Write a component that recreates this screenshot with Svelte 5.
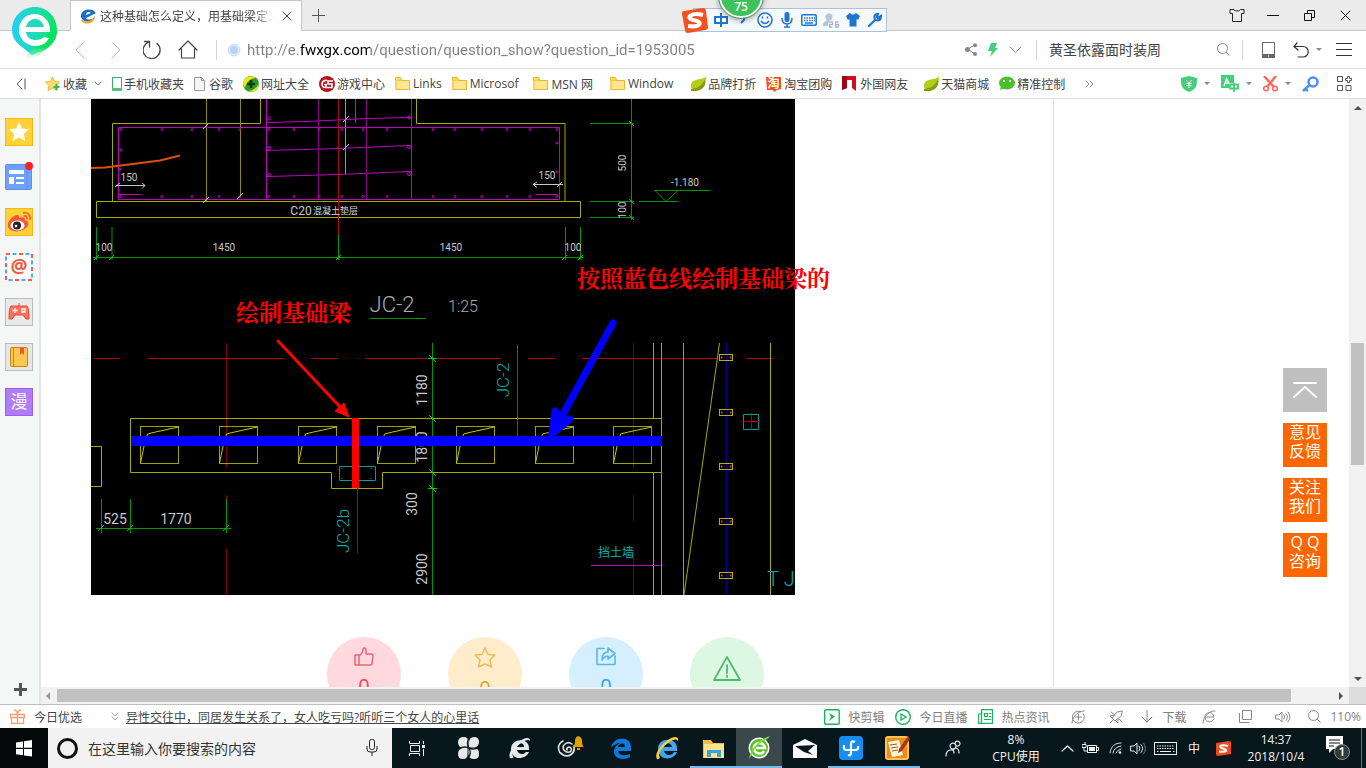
<script>
  const line = (d, c = '#444', w = 1) =>
    `<path d="${d}" fill="none" stroke="${c}" stroke-width="${w}" stroke-linecap="round" stroke-linejoin="round"/>`;
  const folder =
    '<path d="M.5 2.500h6l1 1.500h7.500v10H.5z" fill="#ffd84d"/><path d="M1 4.500h13.500v9H1z" fill="#ffe694" stroke="#edb72b"/><path d="M.5 4.500v-3h5l1 3" fill="#ffdb57" stroke="#edb72b"/>';
  const leaf =
    '<path d="M16 0C14 5 1 1 1 10c0 2 1 3 2 4 6 1 13-1 13-14z" fill="#b5cc18"/><path d="M1 13C7 13 13 9 15 3c2 9-5 13-14 12z" fill="#7f9e10"/>';
  const icons = {
    logo: '<defs><linearGradient id="lg" x1="0" y1="0" x2="1" y2="0"><stop offset="0" stop-color="#25cff0"/><stop offset=".6" stop-color="#1bdcab"/><stop offset="1" stop-color="#08e35f"/></linearGradient><linearGradient id="lf" x1="0" y1="0" x2="0" y2="1"><stop offset=".55" stop-color="#08e35f"/><stop offset="1" stop-color="#fff" stop-opacity="0"/></linearGradient></defs><path d="M23 0C10 0 0 10 0 23c0 10 7 15 15 21l5 4 14-6c7-4 11-11 11-19C45 10 35 0 23 0z" fill="url(#lg)"/><path d="M45 23c0 14-12 19-25 31H9c4-5 9-9 14-13l14-15z" fill="url(#lf)"/><path d="M7 23a15.500 15.500 0 0 1 31-1v3H14c1 6 5 8 10 8 4 0 6-1 8-3l5 1c-3 6-8 8-13 8C14 39 7 32 7 23z" fill="#fff"/><path d="M14 20c1-5 5-8 9-8s8 3 9 8z" fill="#1fd8c0"/>',
    favicon: '<path d="M1 8C0 0 12-2 16 4L6 9c2 3 7 1 9-1C12 14 3 14 1 8zm5-2 5-2c-2-2-5-1-5 2z" fill="#1b6fc0"/><path d="M1 10c4 4 10 3 14-3 0 9-13 10-14 3z" fill="#f6a51c"/>',
    close: line('M1 1l8 8M9 1l-8 8', '#444'),
    plus: line('M6.500 0v13M0 6.500h13', '#555', 1),
    shirt: line('M4.500 1.500h-3.500v4h2.500v8h9v-8h2.500v-4h-3.500c-.5 2-6.500 2-7 0z', '#222'),
    min: line('M0 6.500h12', '#111'),
    restore: '<path d="M.5 3.500h7v7h-7zM3.500 3V.5h7v7H8" fill="none" stroke="#111"/>',
    winclose: line('M1 1l9 9M10 1l-9 9', '#111'),
    back: line('M9 1L1 9l8 8', '#bbb', 1),
    fwd: line('M1 1l8 8-8 8', '#bbb', 1),
    reload: line('M14 3.500a8.500 8.500 0 1 1-8-1.500M1.500 1.500h5v5.500', '#444', 1.3),
    home: line('M1 10l9-9 9 9M3.500 8.500v9.500h13V8.500', '#444', 1.2),
    globe: '<circle cx="7" cy="7" r="6.500" fill="#e3edfc"/><circle cx="7" cy="7" r="4" fill="#b5d1fa"/><circle cx="7" cy="7" r="5.500" fill="none" stroke="#cadefb"/>',
    share: '<path d="M2.500 6L10 2M2.500 6L10 11" stroke="#888" fill="none"/><circle cx="2.500" cy="6.500" r="2.500" fill="#888"/><circle cx="10" cy="2.200" r="2" fill="#888"/><circle cx="10" cy="11" r="2" fill="#888"/>',
    bolt: '<path d="M3 0h6L7 5h3L2 14l2-6H0z" fill="#43d07b"/>',
    chev: line('M1 1l5.500 5.500L12 1', '#888'),
    smallchev: line('M1 1l3 3 3-3', '#777'),
    search: '<circle cx="5.500" cy="5.500" r="5" fill="none" stroke="#888"/><path d="M9 9l3.500 3.500" stroke="#888"/>',
    phone: '<path d="M0 12h13v4H0z" fill="#666"/><path d="M.5.5h12v15H.5z" fill="none" stroke="#666"/><circle cx="6.500" cy="14" r=".8" fill="#fff"/>',
    undo: line('M4 1L1 4.500 5 8M1 4.500h9a5 5 0 0 1 0 10.500H5', '#333', 1.2),
    caret: '<path d="M0 0h6L3 3z" fill="#888"/>',
    menu: '<path d="M0 .5h16M0 6.500h16M0 12.500h16" stroke="#333"/>',
    collapse: line('M6 2L1 7l5 5M9 2v10', '#555'),
    star: '<path d="M7.500 1l2 4.500 5 .5-4 3.500 1 5-4-2.500-4.500 2.500 1-5-3.500-3.500 5-.5z" fill="#ffdc6b" stroke="#eeb336"/><path d="M11.500 8v6M8.500 11h6" stroke="#31b567" stroke-width="2"/>',
    mobile: '<rect x=".5" y=".5" width="9" height="13" fill="#fff" stroke="#31b567"/><path d="M0 11h10v3H0z" fill="#4bc57b"/>',
    page: '<path d="M.5.5h7l3 3v10H.5z" fill="#f5f5f5" stroke="#999"/><path d="M7.500.5v3h3" fill="none" stroke="#999"/>',
    nav: '<circle cx="8" cy="8" r="8" fill="#2c982b"/><path d="M0 8a8 8 0 0 1 13-6C8 2 3 6 2 12z" fill="#f3e711"/><path d="M15.500 6c0 5-5 9-11 9 4 2 12 1 11-9z" fill="#f3e711"/><path d="M8 4v8M4 8h8" stroke="#073c0c" stroke-width="2.500"/>',
    game: '<circle cx="8" cy="8" r="8" fill="#b4161f"/><path d="M8 4.500C2 3 1 12 7 11.500V8.500H5M14 5H9v3h4v3.500H8" fill="none" stroke="#fff" stroke-width="1.600"/>',
    folder, leaf,
    tao: '<path d="M0 1h15v12l-4 1-3 2-1-2H1z" fill="#f0501a"/><text x="1.500" y="12" font-size="12" font-weight="700" fill="#fff" font-family="Noto Sans CJK SC, sans-serif">淘</text>',
    netease: '<path d="M0 0h14v15l-4-3V4H5v8l-5 2z" fill="#d0101c"/><path d="M0 0h5v12l-5 2z" fill="#9b0a14"/>',
    wechat: '<ellipse cx="8" cy="7" rx="8" ry="6.500" fill="#4cbf2c"/><path d="M2 10l-1 4 5-2z" fill="#4cbf2c"/><circle cx="5" cy="5" r="1" fill="#fff"/><circle cx="11" cy="5" r="1" fill="#fff"/>',
    more: line('M1 1l3 3-3 3M5 1l3 3-3 3', '#888'),
    shield: '<path d="M8 0l8 2c0 7 0 11-8 14C0 13 0 9 0 2z" fill="#43cf78"/><path d="M5 4l3 3 3-3M8 7v5M5.500 7.500h5M5.500 9.500h5" stroke="#fff" fill="none"/>',
    trans: '<path d="M0 0h13v8h-5v5H0z" fill="#43cf78"/><path d="M3 11l2.500-7L8 8M4 8h4" stroke="#fff" stroke-width="1.500" fill="none"/><path d="M9 9.500h8v4H9zM13 8v9" stroke="#43cf78" stroke-width="1.800" fill="none"/>',
    cut: '<path d="M1 0l10 11M13 0L4 11" stroke="#f96b62" stroke-width="2.500"/><circle cx="3" cy="12.500" r="2.300" fill="none" stroke="#f96b62" stroke-width="1.600"/><circle cx="12" cy="12.500" r="2.300" fill="none" stroke="#f96b62" stroke-width="1.600"/>',
    key: '<circle cx="11" cy="6" r="4.500" fill="none" stroke="#4b90f6" stroke-width="2.500"/><path d="M7.500 9L1 15M3 13l3 2" stroke="#4b90f6" stroke-width="2.500"/>',
    apps: '<path d="M.5.500h5v5h-5zM.5 9.500h5v5h-5zM9 9.500h5v5H9zM10.500 2.500v-2h2v2h2v2h-2v2h-2v-2h-2v-2z" fill="none" stroke="#555"/>',
    sogou: '<path d="M3 4L22 1q3 0 3 3l2 16q0 3-3 3L7 26q-3 0-3-3L1 7q0-3 2-3z" fill="#f4511e"/><path d="M22 8C10 5 4 11 12 13c10 1 9 8-5 6" fill="none" stroke="#fff" stroke-width="4"/>',
    zhong: '<path d="M1 4h12v6H1zM7 0v14" fill="none" stroke="#1f76cf" stroke-width="2"/>',
    comma: '<path d="M2 0q3 0 2 4L1 7" fill="none" stroke="#1f76cf" stroke-width="2"/>',
    smile: '<circle cx="8" cy="8" r="7" fill="none" stroke="#1f76cf" stroke-width="1.600"/><path d="M4 9q4 5 8 0M5.500 4.500v2M10.500 4.500v2" fill="none" stroke="#1f76cf" stroke-width="1.600"/>',
    mic: '<rect x="3.500" y="0" width="5" height="10" rx="2.500" fill="#1f76cf"/><path d="M1 6q0 6 5 6t5-6M6 12v3M3 15h6" fill="none" stroke="#1f76cf" stroke-width="1.500"/>',
    kbd: '<rect x=".8" y=".8" width="14.400" height="10.400" rx="1" fill="none" stroke="#1f76cf" stroke-width="1.500"/><path d="M3 4h11M3 6.500h11" stroke="#1f76cf" stroke-width="1.500" stroke-dasharray="1.500 1"/><path d="M4 9h8" stroke="#1f76cf" stroke-width="1.500"/>',
    user26: '<circle cx="6" cy="4" r="3.500" fill="#b9c4dc"/><path d="M0 13c0-7 9-7 11-4v4z" fill="#b9c4dc"/><path d="M6.500 9h3v2.500h-3V14h3M15.500 9h-3v5h3v-2.500h-3" fill="none" stroke="#fff" stroke-width="3"/><path d="M6.500 9h3v2.500h-3V14h3M15.500 9h-3v5h3v-2.500h-3" fill="none" stroke="#a9b4cc" stroke-width="1.300"/>',
    tee: '<path d="M4 0q3 3 6 0l4 3-2 4-1.500-1v7.500h-7V6L2 7 0 3z" fill="#1f76cf"/>',
    wrench: '<path d="M1 13l6-6M13 3l-3 2-1-1 1-3C6 1 6 4 7 7c4 1 6 0 6-4z" stroke="#1f76cf" stroke-width="2.200" fill="none" stroke-linecap="round"/>',
    sStar: '<rect x=".5" y=".5" width="27" height="27" fill="#ffd23a" stroke="#f9b712"/><path d="M14 4l3 6.500 7 .7-5.200 4.800 1.500 7L14 19.500 7.700 23l1.500-7L4 11.200l7-.7z" fill="#fff"/>',
    sNews: '<rect x=".5" y="1.500" width="26" height="25" rx="1" fill="#6ea1fb" stroke="#5a90f0"/><path d="M22 2v24" stroke="#5a90f0"/><path d="M4 7h15v4H4zM4 14h5v7H4zM11 14h8v2h-8zM11 19h8v2h-8z" fill="#fff"/><circle cx="24" cy="3" r="4" fill="#ff1f1f"/>',
    sWeibo: '<rect x=".5" y=".5" width="27" height="27" fill="#ffd23a" stroke="#f9b712"/><path d="M3 18C2 12 10 6 13 7c2 1 1 3 1 3s6-3 6 2c3 1 5 4 2 7-5 6-18 6-19-1z" fill="#f2573a"/><ellipse cx="12.500" cy="17.500" rx="7" ry="5" fill="#fff"/><circle cx="12" cy="17.500" r="4" fill="#222"/><circle cx="11" cy="18" r="1.300" fill="#fff"/><path d="M18 5c5-1 8 2 7 7M18.500 8c2.500-.5 4 1 3.500 3.500" fill="none" stroke="#f2573a" stroke-width="1.600"/>',
    sMail: '<rect width="28" height="28" fill="#fff"/><path d="M1 1h26v26H1z" fill="none" stroke="#ff5a45" stroke-width="2" stroke-dasharray="4 9"/><path d="M1 1h26v26H1z" fill="none" stroke="#46aef7" stroke-width="2" stroke-dasharray="4 9" stroke-dashoffset="-6.500"/><text x="14" y="20" text-anchor="middle" font-size="19" font-weight="700" fill="#ef5a3c" font-family="Open Sans, sans-serif">@</text>',
    sGame: '<rect x=".5" y=".5" width="27" height="27" fill="#e9e9e9" stroke="#bdbdbd"/><path d="M14 5v3" stroke="#e04a3a"/><path d="M6 8h16q2 2 2 13h-3l-3-4h-8l-3 4H4Q4 10 6 8z" fill="#ff705c" stroke="#e04a3a"/><path d="M10 10v5M7.500 12.500h5M17 11h3v3h-3z" stroke="#fff" stroke-width="1.300" fill="none"/>',
    sBook: '<rect x=".5" y=".5" width="27" height="27" fill="#e6e6e6" stroke="#bdbdbd"/><rect x="5.500" y="4.500" width="17" height="19" rx="1" fill="#fec750" stroke="#c58412"/><path d="M8.500 5v18" stroke="#c58412"/><path d="M15 5h4v7l-2-2-2 2z" fill="#f2573a"/>',
    sMan: '<rect x=".5" y=".5" width="27" height="27" fill="#b07cf8" stroke="#9a5fee"/><text x="14" y="20" text-anchor="middle" font-size="17" fill="#fff" font-family="Noto Sans CJK SC, sans-serif">漫</text>',
    sPlus: '<path d="M6.500 0v13M0 6.500h13" stroke="#555" stroke-width="3"/>',
    top: line('M1 1h22M1 15L12 5l11 10', '#fff', 2),
    like: line('M1 8h4v10H1zM5 9c3-2 4-4 4-7 0-2 3-1 3 1v4h5q2 0 2 2l-1 7q0 2-2 2H5', '#f2627a', 1.500),
    fav: line('M11 1l3 6.500 7 .5-5 5 1.500 7-6.500-3-6.500 3L6 13 1 8l7-.5z', '#efbd58', 1.500),
    fwdbox: line('M8 1.500H1v16h18V9M12 1v4C8 5 6 8 6 13c2-3 3-4 6-4v3l7-5.500z', '#57b7ea', 1.600),
    warn: line('M15 2L28 25H2zM15 10v8M15 20.500v1.500', '#52ba6e', 1.800),
    gift: '<path d="M.5 5.500h14v3H.5zM1.500 8.500h12v6h-12zM7.500 5v10M4 1q3 0 3.500 4M11 1Q8 1 7.500 5" fill="none" stroke="#f3a078" stroke-width="1.300"/>',
    dchev: line('M1 1l3 3 3-3M1 5l3 3 3-3', '#888', .8),
    clip: '<rect x=".7" y=".7" width="14.500" height="14.500" rx="1" fill="none" stroke="#15b55c" stroke-width="1.400"/><path d="M5 4l6 3.500L5 12l2-4z" fill="#15b55c"/>',
    live: '<circle cx="8" cy="8" r="7.300" fill="none" stroke="#15b55c" stroke-width="1.400"/><path d="M6 5l5 3-5 3z" fill="none" stroke="#15b55c" stroke-width="1.300"/>',
    hot: '<path d="M3.500.7h11v13.600H.7V5h3zM3.500 4v10M6.500 4.500h3v3h-3zM11 4.500h2M11 7.500h2M6 10.500h7" fill="none" stroke="#15b55c" stroke-width="1.200"/>',
    plusE: line('M12.500 4a6 6 0 1 1-3-2.500M4.500 7h6M7.500 4v6M1 13C1 8 6 1 13 1', '#888'),
    rocket: line('M13 1L8 2 3 8l3 3 6-5zM5 5L1 6l2 2M9 9v4l-2-2M4 10l-3 3M2 2l4 3M10 9l3 3', '#888'),
    down: line('M6 0v12M1 7l5 5 5-5', '#888'),
    eout: line('M12 9c-2 4-8 4-9-1-1-6 8-8 9-1H4M1 13C1 7 8 0 13 1', '#888'),
    wins: '<path d="M3.500.5h9v9h-9zM.5 3v9.500H10" fill="none" stroke="#888"/>',
    spk: line('M1 4h3l3-3v10L4 8H1zM9 4q1.500 2 0 4M11 2.500q3 3.500 0 7M13 1q4 5 0 10', '#888'),
    win: '<path d="M0 2.500l7-1v6.300H0zM8 1.300L16 0v7.800H8zM0 9h7v6.300l-7-1zM8 9h8v7.500L8 15.500z" fill="#fff"/>',
    cortana: '<circle cx="10.500" cy="10.500" r="9" fill="none" stroke="#111" stroke-width="3"/>',
    tmic: '<rect x="3.500" y=".5" width="5" height="10" rx="2" fill="none" stroke="#222"/><path d="M1 7v3q0 3 3 3h4q3 0 3-3V7M6 13v4" fill="none" stroke="#222"/>',
    tview: '<path d="M.5 0v2.500h10V0M.5 15v-2.500h10V15M1.500 4.500h9v6h-9zM14.500 0v3M14.500 8v7" fill="none" stroke="#eee"/><path d="M13 4h3v3h-3z" fill="#eee"/>',
    fan: '<g fill="#e8eaea"><path d="M11.500 10.500V5q0-5-5-5T1 5q0 5.500 5 5.500z"/><path d="M12 10.500V6q0-6 5-6t5 5q0 4-4 5.500z"/><path d="M10.500 11H6q-5 1-5 6 0 5 5 5t4.500-6z"/><path d="M11.500 11v6q0 5 5.500 5t5-5.500q0-5.500-5-5.500z"/></g><path d="M12 1q-3 5 0 10t-1 10M2 11.500q5-3 10-.5t10-1" fill="none" stroke="#07171b" stroke-width="1.400"/>',
    ewhite: '<path d="M2 12C2 1 20 0 20 11v2H8c1 5 7 5 9 2h3c-3 8-18 9-18-3zm6-2h7c0-5-6-5-7 0z" fill="#e6eaea"/><path d="M1 21C-2 15 9 2 18 1q3 0 3 3-2-3-9 2C5 11 1 18 5 20q-2 2-4 1z" fill="#e6eaea"/>',
    swirl: line('M15 8C10 4 4 10 7 14s9 2 7-2c-2-2-5 0-4 2M17 10c2 7-5 12-11 9S0 8 6 5M4 17c6 6 14 1 13-6', '#d9dddd', 1.600) + '<path d="M15 11q3-1 3-6 0-4 3-5 4 1 4 5 0 5 2 6zM20 12h3v2h-3z" fill="#dfa000"/>',
    edge: '<path d="M0 10C2-2 20-3 20 10v3H7c1 5 8 5 12 3v3C12 23 2 21 3 12c1-4 4-6 6-7-3 0-7 2-9 5zm7-1h7c0-5-6-4-7 0z" fill="#0b79dc"/>',
    ie: '<path d="M3 13C3 1 22 1 22 12v3H9c1 5 8 5 10 1h3c-3 9-19 9-19-3zm6-2h8c-1-5-7-5-8 0z" fill="#42a5ee"/><path d="M2 23C-2 17 11 2 20 1q4 0 3 4-2-4-10 2C6 12 2 19 5 21q-1 3-3 2z" fill="#f6cf3a"/>',
    explorer: '<path d="M0 1h8l2 3h11v15H0z" fill="#e8bd4c"/><path d="M1 5h20v14H1z" fill="#ffe28a"/><path d="M4 18v-7h14v7h-4v-4H8v4z" fill="#35a6e4"/>',
    green: '<circle cx="11" cy="12" r="10.500" fill="#fff"/><circle cx="11" cy="12" r="9" fill="#5cc128"/><path d="M16 15c-2 4-10 3-10-3s10-7 11 0H8" fill="none" stroke="#fff" stroke-width="2.600"/><path d="M1 23C3 12 12 3 22 0c-2 4-8 5-12 9-5 5-6 11-9 14z" fill="#7bdc3a"/>',
    mail: '<path d="M0 6l12-6 12 6v13H0z" fill="#fff"/><path d="M2 7l20-1-7 6 5 4-9-3z" fill="#07181c"/>',
    blue: '<rect width="24" height="24" rx="4" fill="#168ef0"/><path d="M16 6q-4-2-4 2v9q0 3-3 2M5 9v1q-1 4 3 4h8q4 0 3-4" fill="none" stroke="#fff" stroke-width="2.200"/>',
    note: '<rect x="1" y="1" width="22" height="22" rx="2" fill="#f08a1c" stroke="#ffc552" stroke-width="2"/><path d="M3 6l11-2 4 15-11 2z" fill="#fff6d8"/><path d="M5 9l7-1M6 12l7-1M7 15l6-1" stroke="#8a5a2a"/><path d="M23 0l-9 13-1 4 4-2 8-12z" fill="#a1391d"/>',
    people: line('M5 6a3 3 0 1 1 0 .1M1 16q0-5 4-6t4 3M10 3.500a2.500 2.500 0 1 1 0 .1M10 8q4 0 4 5', '#eee', 1.200),
    up: line('M1 6l5.500-5L12 6', '#eee', 1.200),
    batt: '<path d="M5.500 3.500h9v7h-9zM15 5.500h1.500v3H15M3 0v2M0 2.500h4v3H0zM2 6v3h3" fill="none" stroke="#eee"/><path d="M7 5h6v4H7z" fill="#eee"/>',
    wifi: line('M1 11C2 4 6 1 12 1M4 11q1-6 8-7M7 11q1-3 5-4', '#ddd') + '<circle cx="11" cy="10.500" r="1.300" fill="#eee"/>',
    tspk: line('M1 4h3l3-3v11L4 9H1zM9 4q2 2.500 0 5M11 2.500q3.500 4 0 8', '#eee') + line('M13.500 1q4 5.500 0 11', '#777'),
    tkbd: '<rect x=".5" y=".5" width="22" height="12" fill="none" stroke="#eee"/><path d="M3 4h17M3 6.500h17M3 9.500h2M19 9.500h2" stroke="#eee" stroke-dasharray="1.500 1"/><path d="M6 9.500h11" stroke="#eee"/>',
    tsogou: '<path d="M1 2l13-2q2 0 2 2v11L3 15q-2 0-2-2z" fill="#ee4c1e"/><path d="M13 5C5 3 3 6 8 7.500s4 4-4 3" fill="none" stroke="#fff" stroke-width="2.200"/>',
    notif: '<path d="M0 0h17v13H7l-4 4v-4H0z" fill="#fff"/><path d="M3 4h11M3 7h11M3 10h5" stroke="#111"/><circle cx="16" cy="16" r="7.500" fill="#343a3c" stroke="#8a8f90"/><text x="16" y="20" text-anchor="middle" font-size="12" font-weight="600" fill="#fff" font-family="Open Sans, sans-serif">1</text>',
    arrL: '<path d="M4 0v8L0 4z" fill="#999"/>',
    arrR: '<path d="M0 0v8l4-4z" fill="#505050"/>',
    arrU: '<path d="M0 4h8L4 0z" fill="#505050"/>',
    arrD: '<path d="M0 0h8L4 4z" fill="#505050"/>'
  };

  const bookmarks = [
    { icon: 'mobile', w: 10, h: 14, label: '手机收藏夹', cls: 'slim' },
    { icon: 'page', w: 11, h: 14, label: '谷歌', cls: 'snug' },
    { icon: 'nav', w: 16, h: 16, label: '网址大全' },
    { icon: 'game', w: 16, h: 16, label: '游戏中心' },
    { icon: 'folder', w: 15, h: 15, label: 'Links' },
    { icon: 'folder', w: 15, h: 15, label: 'Microsof', cls: 'wide' },
    { icon: 'folder', w: 15, h: 15, label: 'MSN 网', cls: 'wider' },
    { icon: 'folder', w: 15, h: 15, label: 'Window', cls: 'wider' },
    { icon: 'leaf', w: 17, h: 16, label: '品牌打折' },
    { icon: 'tao', w: 16, h: 16, label: '淘宝团购' },
    { icon: 'netease', w: 14, h: 15, label: '外国网友', cls: 'wide' },
    { icon: 'leaf', w: 17, h: 16, label: '天猫商城' },
    { icon: 'wechat', w: 16, h: 15, label: '精准控制' }
  ];
  const side = [
    ['sStar', '收藏'], ['sNews', '新闻'], ['sWeibo', '微博'], ['sMail', '邮件'],
    ['sGame', '游戏'], ['sBook', '小说'], ['sMan', '漫画']
  ];
  const reactions = [
    { icon: 'like', w: 20, h: 20, cls: 'pink', n: '0', label: '赞' },
    { icon: 'fav', w: 22, h: 22, cls: 'amber', n: '0', label: '收藏' },
    { icon: 'fwdbox', w: 20, h: 20, cls: 'sky', n: '0', label: '分享' },
    { icon: 'warn', w: 30, h: 27, cls: 'mint', n: '', label: '举报' }
  ];
  const feedback = [['意见', '反馈'], ['关注', '我们'], ['Q Q', '咨询']];
  const pinned = [
    ['tview', 17, 15, '任务视图'], ['fan', 23, 22, '应用'], ['ewhite', 22, 23, '浏览器'], ['swirl', 28, 24, '提醒']
  ];
  const running = [
    ['edge', 20, 21, 'Edge', ''], ['ie', 24, 24, 'Internet Explorer', ''], ['explorer', 21, 19, '文件资源管理器', 'open'],
    ['green', 22, 24, '浏览器', 'open active'], ['mail', 24, 19, '邮件', ''], ['blue', 24, 24, '同步', 'open'], ['note', 25, 24, '笔记', 'open']
  ];
  const ime = [
    ['zhong', 14, 14, '中文'], ['comma', 6, 8, '标点'], ['smile', 16, 16, '表情'], ['mic', 12, 16, '语音'],
    ['kbd', 16, 12, '键盘'], ['user26', 17, 15, '账户'], ['tee', 14, 14, '皮肤'], ['wrench', 14, 14, '工具']
  ];
  const rebarX = [121, 162, 192, 219, 240, 269, 294, 319, 342, 363, 387, 433, 455, 482, 507, 530, 557];
  const pads = [140.5, 219.5, 298.5, 377.500, 456.500, 535.5, 613.5];
  const piles = [354.5, 409.5, 463.5, 518.5, 572.5];
  let url = $state('http://e.fwxgx.com/question/question_show?question_id=1953005');
  let query = $state('');
</script>

{#snippet ico(name, w, h)}
  <svg width={w} height={h} viewBox="0 0 {w} {h}" aria-hidden="true">{@html icons[name]}</svg>
{/snippet}

<div class="window">
  <header>
    <div class="tabs">
      <div class="tab">
        {@render ico('favicon', 16, 15)}
        <span class="title">这种基础怎么定义，用基础梁定义</span>
        <button aria-label="关闭标签">{@render ico('close', 10, 10)}</button>
      </div>
      <button class="newtab" aria-label="新标签">{@render ico('plus', 13, 13)}</button>
      <div class="winbtns">
        <button aria-label="皮肤">{@render ico('shirt', 17, 15)}</button>
        <button aria-label="最小化">{@render ico('min', 12, 12)}</button>
        <button aria-label="还原">{@render ico('restore', 11, 11)}</button>
        <button aria-label="关闭">{@render ico('winclose', 11, 11)}</button>
      </div>
    </div>

    <nav class="toolbar">
      <button aria-label="后退">{@render ico('back', 10, 18)}</button>
      <button aria-label="前进">{@render ico('fwd', 10, 18)}</button>
      <button aria-label="刷新">{@render ico('reload', 19, 19)}</button>
      <button aria-label="主页">{@render ico('home', 20, 19)}</button>
      <span class="sep"></span>
      <label class="address">
        {@render ico('globe', 14, 14)}
        <input type="text" aria-label="地址" bind:value={url} />
      </label>
      <div class="quick">
        <button aria-label="分享">{@render ico('share', 12, 13)}</button>
        <button aria-label="加速">{@render ico('bolt', 10, 14)}</button>
        <button aria-label="展开">{@render ico('chev', 13, 8)}</button>
      </div>
      <span class="sep"></span>
      <label class="find">
        <input type="text" aria-label="搜索" placeholder="黄圣依露面时装周" bind:value={query} />
        {@render ico('search', 13, 13)}
      </label>
      <span class="sep"></span>
      <div class="tools">
        <button aria-label="手机">{@render ico('phone', 13, 16)}</button>
        <button aria-label="撤销">{@render ico('undo', 16, 16)}{@render ico('caret', 6, 3)}</button>
        <button aria-label="菜单">{@render ico('menu', 16, 13)}</button>
      </div>
    </nav>

    <nav class="bookmarks">
      <button class="collapse" aria-label="收起">{@render ico('collapse', 10, 14)}</button>
      <button class="favbtn">{@render ico('star', 16, 15)}<span>收藏</span>{@render ico('smallchev', 8, 5)}</button>
      <div class="links">
        {#each bookmarks as b}
          <a href="#top" class="bm {b.cls ?? ''}"><span class="bi">{@render ico(b.icon, b.w, b.h)}</span>{b.label}</a>
        {/each}
        <button class="morebtn" aria-label="更多">{@render ico('more', 9, 8)}</button>
      </div>
      <div class="exts">
        <button aria-label="安全">{@render ico('shield', 16, 16)}{@render ico('caret', 6, 3)}</button>
        <button aria-label="翻译">{@render ico('trans', 18, 17)}{@render ico('caret', 6, 3)}</button>
        <button aria-label="截图">{@render ico('cut', 15, 16)}{@render ico('caret', 6, 3)}</button>
        <button aria-label="密码">{@render ico('key', 17, 16)}</button>
        <button aria-label="应用">{@render ico('apps', 15, 15)}</button>
      </div>
    </nav>
    <div class="logo">{@render ico('logo', 45, 56)}</div>
    <div class="ime">
      <span class="imelogo">{@render ico('sogou', 28, 27)}</span>
      {#each ime as [n, w, h, l]}<button aria-label={l}>{@render ico(n, w, h)}</button>{/each}
    </div>
    <div class="ball">75</div>
  </header>

  <div class="body">
    <aside>
      {#each side as [n, l]}<button aria-label={l}>{@render ico(n, 28, 28)}</button>{/each}
      <button class="add" aria-label="添加">{@render ico('sPlus', 13, 13)}</button>
    </aside>
    <div class="view">
      <main>
        <article>
          <svg class="cad" width="704" height="496" viewBox="91 99 704 496" role="img" aria-label="JC-2">
            <path class="bg" d="M91 99h704v496H91z" />
            <g class="dred">
              <path d="M226.500 343v124M226.500 495v26M226.500 549v46M633.500 343v124M633.500 495v26M633.500 549v46" />
              <path class="red" d="M93 358.500h27M148 358.500h136M311 358.500h27M365 358.500h136M528 358.500h27M582 358.500h136M746 358.500h27" />
            </g>
            <g class="yellow">
              <path d="M260.500 99v24.500h-148v78M416.500 99v24.500h148.500v78M96.500 201.500h484v16h-484zM345.500 99v75" />
              <path class="dim" d="M206.500 99v102M240.500 99v98" />
              <path d="M130.500 418.500h531M661.500 472.500h-279v16h-51v-16h-201v-54M91 446.500h10.500v40H91" />
              <path d="M653.500 343v75M653.500 472v123M661.500 343v252M683.500 343v252M770.500 343v252M719.500 343L684 595" />
            </g>
            <g class="magenta">
              <path d="M118.500 127.500h441v72h-441zM266.500 99v100M411.500 99v100M267 122.500l40-1 60-3 44-1M267 150.500l70-2 74-3M267 176.500l70-2 74-3M118 194.500h23M536 194.500h22" />
              <path class="dim" d="M318.500 99v100M366.500 99v100M357.500 488v65" />
              <path d="M591 565.500h70M517.500 345v91" />
              {#each rebarX as x}<circle cx={x} cy="129.500" r="1" /><circle cx={x} cy="196.500" r="1" />{/each}
              {#each [118.5, 148, 175] as y}<circle cx="269" cy={y} r="1.500" /><circle cx="409" cy={y - 1} r="1.500" />{/each}
              <circle cx="121" cy="150" r="1" /><circle cx="120" cy="169" r="1" /><circle cx="557" cy="143" r="1" /><circle cx="557" cy="172" r="1" />
            </g>
            <path class="red" d="M338.500 99v135" />
            <g class="green">
              <path d="M355.500 99v24M338.500 234v26M93 257.500h491M96.500 227v33M112 227v33M565.500 227v33M580.500 227v33" />
              <path d="M590 123.500h44M590 201.500h44M590 217.500h44M631.500 99v121M654 190.500h56M655 190.500l11 11 12-11M639 201.500h39M370 318.500h56" />
              <path d="M432.500 343v252M96 528.500h135M101.500 499v34M130.500 499v34M226.500 499v34" />
              <path class="tick" d="M94 260l5-5M109 260l5-5M336 260l5-5M562 260l5-5M578 260l5-5M629 121l5 5M629 199l5 5M629 215l5 5M429 355l7 7M429 415l7 7M429 469l7 7M429 485l7 7M98 531l6-6M127 531l6-6M223 531l6-6M428 358.500h9M428 488.500h9" />
            </g>
            <g class="white">
              <path d="M116 185.500h29M142 183l3 2.500-3 3M115 187l5-4M533 184.500h30M537 182l-4 2.500 4 3M557 187l5-5M203 129l6-6M203 203l6-6M237 199l6-6M343 122l6-6M343 150l6-6" />
            </g>
            <path class="orange" d="M91 168l14-.5 55-7 20-5" />
            {#each pads as x}
              <rect class="pad" {x} y="426.500" width="38" height="37" />
              <path class="padline" d="M{x} 463l4-19 3-10 8-2 23-5" />
            {/each}
            <path class="navy" d="M726.500 343v252" />
            {#each piles as y}
              <rect class="pile" x="719.500" {y} width="13" height="6" />
              <path class="dot" d="M721 {y + 3}h1.500M730 {y + 3}h1.500" />
            {/each}
            <g class="cyan">
              <path d="M339.500 466.500h36v14h-36zM743.500 414.500h15v15h-15z" />
              <path d="M342 468v1M342 478v1M371 468v1M371 478v1" />
            </g>
            <path class="red" d="M742 421.500h18M751.500 413v17" />
            <g class="num small">
              <text x="129" y="181">150</text><text x="547" y="179">150</text>
              <text x="104" y="251">100</text><text x="224" y="251">1450</text><text x="451" y="251">1450</text><text x="573" y="251">100</text>
              <text transform="translate(626 163) rotate(-90)">500</text><text transform="translate(626 210) rotate(-90)">100</text>
              <text x="685" y="186">-1.180</text>
            </g>
            <g class="num mid">
              <text x="115" y="524">525</text><text x="176" y="524">1770</text>
              <text transform="translate(427 390) rotate(-90)">1180</text><text transform="translate(427 447) rotate(-90)">1800</text>
              <text transform="translate(417 504) rotate(-90)">300</text><text transform="translate(427 569) rotate(-90)">2900</text>
            </g>
            <text class="num c20" x="301" y="215">C20</text>
            <text class="layer" x="313" y="214">混凝土垫层</text>
            <text class="num big" x="392" y="312">JC-2</text>
            <text class="num scale" x="463" y="312">1:25</text>
            <text class="num tag" transform="translate(349 531) rotate(-90)">JC-2b</text>
            <text class="num tag" transform="translate(509 380) rotate(-90)">JC-2</text>
            <text class="num tag tj" x="781" y="586">T J</text>
            <text class="wall" x="598" y="557">挡土墙</text>
            <path class="beamblue" d="M131 441h531" />
            <path class="beamred" d="M355.500 418v70" />
            <path class="arrowblue" d="M613 323l-61 111" />
            <path class="headblue" d="M555 411l-3 23 18-15-10 1z" />
            <path class="arrowred" d="M278 341l64 68" />
            <path class="headred" d="M349 417l-14-6 9-8z" />
            <text class="mark" x="236" y="321">绘制基础梁</text>
            <text class="mark" x="577" y="287">按照蓝色线绘制基础梁的</text>
          </svg>
          <div class="reactions">
            {#each reactions as r}
              <button class={r.cls} aria-label={r.label}>{@render ico(r.icon, r.w, r.h)}{#if r.n}<span>{r.n}</span>{/if}</button>
            {/each}
          </div>
        </article>
        <div class="float">
          <button class="totop" aria-label="返回顶部">{@render ico('top', 24, 17)}</button>
          {#each feedback as [a, b]}<button>{a}<br />{b}</button>{/each}
        </div>
      </main>
      <div class="vscroll">{@render ico('arrU', 8, 4)}<span></span>{@render ico('arrD', 8, 4)}</div>
      <div class="hscroll">{@render ico('arrL', 4, 8)}<span></span>{@render ico('arrR', 4, 8)}</div>
      <div class="corner"></div>
    </div>
  </div>

  <div class="status">
    {@render ico('gift', 15, 15)}
    <span class="pick">今日优选</span>
    {@render ico('dchev', 8, 9)}
    <a href="#news">异性交往中，同居发生关系了，女人吃亏吗?听听三个女人的心里话</a>
    <div class="right">
      <button class="lab">{@render ico('clip', 16, 16)}快剪辑</button>
      <button class="lab">{@render ico('live', 16, 16)}今日直播</button>
      <button class="lab">{@render ico('hot', 15, 15)}热点资讯</button>
      <button class="sq" aria-label="加速器">{@render ico('plusE', 15, 14)}</button>
      <button class="sq" aria-label="火箭">{@render ico('rocket', 14, 14)}</button>
      <button class="dl">{@render ico('down', 12, 13)}下载</button>
      <button class="sq" aria-label="内核">{@render ico('eout', 14, 14)}</button>
      <button class="sq" aria-label="窗口">{@render ico('wins', 13, 13)}</button>
      <button class="sq" aria-label="声音">{@render ico('spk', 16, 12)}</button>
      <button class="zoom">{@render ico('search', 13, 13)}110%</button>
    </div>
  </div>

  <footer>
    <button class="start" aria-label="开始">{@render ico('win', 16, 17)}</button>
    <label class="cortana">
      {@render ico('cortana', 21, 21)}
      <input type="text" aria-label="搜索内容" placeholder="在这里输入你要搜索的内容" />
      {@render ico('tmic', 12, 18)}
    </label>
    <div class="pinned">
      {#each pinned as [n, w, h, l]}<button aria-label={l}>{@render ico(n, w, h)}</button>{/each}
    </div>
    <div class="running">
      {#each running as [n, w, h, l, c]}<button class={c} aria-label={l}>{@render ico(n, w, h)}</button>{/each}
    </div>
    <div class="tray">
      <button class="w40" aria-label="人脉">{@render ico('people', 16, 17)}</button>
      <div class="cpu">8%<br />CPU使用</div>
      <button class="w16" aria-label="显示隐藏图标">{@render ico('up', 13, 7)}</button>
      <button class="w30" aria-label="电池">{@render ico('batt', 17, 12)}</button>
      <button class="w20" aria-label="网络">{@render ico('wifi', 13, 12)}</button>
      <button class="w26" aria-label="音量">{@render ico('tspk', 17, 13)}</button>
      <button class="w28" aria-label="触摸键盘">{@render ico('tkbd', 23, 13)}</button>
      <button class="w30">中</button>
      <button class="w28" aria-label="输入法">{@render ico('tsogou', 17, 15)}</button>
      <div class="clock">14:37<br />2018/10/4</div>
      <button class="w46" aria-label="通知">{@render ico('notif', 25, 25)}</button>
      <span class="desk"></span>
    </div>
  </footer>
</div>

<style>
  :global(body) { margin: 0; overflow: hidden; }
  .window { height: 100vh; display: flex; flex-direction: column; background: #fff; font-family: "Open Sans", "Noto Sans CJK SC", sans-serif; font-size: 12px; color: #444; }
  button { border: 0; padding: 0; margin: 0; background: none; font: inherit; color: inherit; display: flex; align-items: center; justify-content: center; flex: none; }
  input { border: 0; padding: 0; margin: 0; background: none; font: inherit; color: inherit; outline: 0; min-width: 0; }
  a { color: inherit; text-decoration: none; }
  svg { flex: none; display: block; }
  header { position: relative; flex: none; }

  .tabs { height: 30px; background: #ebebeb; border-bottom: 1px solid #c6c6c6; display: flex; align-items: center; padding-left: 70px; }
  .tab { box-sizing: border-box; width: 232px; height: 31px; margin-bottom: -1px; background: #fff; border: 1px solid #c6c6c6; border-bottom: 0; display: flex; align-items: center; gap: 4px; padding: 0 9px; }
  .title { flex: 1; overflow: hidden; white-space: nowrap; margin-right: 4px; mask-image: linear-gradient(90deg, #000 88%, transparent); }
  .newtab { width: 32px; height: 30px; }
  .winbtns { margin-left: auto; display: flex; padding-right: 3px; }
  .winbtns button { width: 36px; height: 30px; }

  .toolbar { height: 37px; border-bottom: 1px solid #dedede; display: flex; align-items: center; padding-left: 62px; }
  .toolbar > button { width: 36px; height: 37px; }
  .sep { width: 1px; height: 20px; background: #d5d5d5; flex: none; }
  .toolbar > .sep:first-of-type { margin-left: 10px; }
  .address { flex: 1; display: flex; align-items: center; gap: 6px; padding-left: 10px; }
  .address input { flex: 1; font-family: "Roboto", sans-serif; font-size: 15px; height: 24px; color: transparent; background: linear-gradient(90deg, #808080 54px, #000 54px, #000 123px, #808080 123px); background-clip: text; -webkit-background-clip: text; }
  .quick { display: flex; gap: 11px; padding-right: 14px; }
  .find { display: flex; align-items: center; width: 181px; padding: 0 12px; font-size: 14px; }
  .find input { flex: 1; }
  .find input::placeholder { color: #444; opacity: 1; }
  .tools { display: flex; gap: 18px; padding: 0 14px 0 19px; }
  .tools button { gap: 7px; }
  .tools button:last-child { margin-left: -4px; }

  .bookmarks { height: 29px; border-bottom: 1px solid #dedede; display: flex; align-items: center; padding: 0 14px 0 16px; }
  .favbtn { margin-left: 19px; gap: 2px; }
  .favbtn span { margin-right: 5px; }
  .links { flex: 1; display: flex; gap: 10px; padding-left: 10px; align-items: center; min-width: 0; }
  .bm { display: flex; align-items: center; white-space: nowrap; }
  .bi { width: 18px; display: flex; flex: none; }
  .slim .bi { width: 12px; }
  .snug .bi { width: 15px; }
  .wide { margin-right: 5px; }
  .wider { margin-right: 7px; }
  .morebtn { margin-left: 10px; }
  .exts { display: flex; gap: 11px; align-items: center; }
  .exts button { gap: 7px; }
  .exts button:last-child { margin-left: 7px; }

  .logo { position: absolute; left: 12px; top: 7px; }
  .ime { position: absolute; left: 693px; top: 8px; width: 192px; height: 22px; border: 1px solid #a9c3dc; background: #f7fafd; display: flex; align-items: center; justify-content: flex-end; }
  .ime button { width: 22px; }
  .imelogo { width: 28px; margin-right: 1px; }
  .ball { position: absolute; left: 719px; top: -26px; box-sizing: border-box; width: 44px; height: 44px; border: 2px solid #fff; outline: 1px solid #4a9a5c; border-radius: 50%; background: #3ec25a; box-shadow: 0 2px 6px #0006; color: #fff; font-weight: 600; text-align: center; line-height: 16px; padding-top: 23px; }

  .body { flex: 1; min-height: 0; display: flex; }
  aside { flex: none; background: #f5f7f7; border-right: 2px solid #e4e4e4; display: flex; flex-direction: column; align-items: center; gap: 17px; padding: 19px 1px 0 0; box-sizing: border-box; width: 41px; }
  aside :global(svg) { overflow: visible; }
  .add { margin-top: auto; padding: 0 0 8px 3px; }
  .view { flex: 1; min-width: 0; display: grid; grid-template: minmax(0, 1fr) 17px / minmax(0, 1fr) 17px; }
  main { display: flex; overflow: hidden; min-height: 0; }
  article { width: 912px; flex: none; padding: 0 50px; border-right: 1px solid #dedede; }
  .float { margin: 269px 22px 0 auto; display: flex; flex-direction: column; gap: 11px; }
  .float button { width: 44px; height: 44px; background: #f60; color: #fff; font-size: 16px; line-height: 19px; padding-bottom: 6px; display: block; }
  .float .totop { background: #bfbfbf; display: flex; padding: 0; }
  .vscroll { background: #f1f1f1; display: grid; grid-template-rows: 17px 1fr 17px; place-items: center; }
  .vscroll span { width: 13px; height: 22%; background: #c1c1c1; align-self: start; margin-top: 227px; }
  .hscroll { background: #f1f1f1; display: flex; align-items: center; padding: 0 6px 0 5px; }
  .hscroll span { height: 13px; background: #c1c1c1; flex: 1; margin: 0 48px 0 7px; }
  .corner { background: #dcdcdc; }

  .reactions { display: flex; justify-content: center; gap: 47px; margin-top: 42px; padding-right: 3px; }
  .reactions button { width: 74px; height: 74px; border-radius: 50%; flex-direction: column; justify-content: flex-start; padding-top: 10px; font-size: 20px; line-height: 24px; gap: 7px; }
  .reactions .pink { background: #ffd9de; color: #f04561; }
  .reactions .amber { background: #ffecca; color: #e0a21e; }
  .reactions .sky { background: #d5efff; color: #2ba3e6; }
  .reactions .mint { background: #dcf8e3; padding-top: 18px; }

  .cad { overflow: visible; }
  .cad path, .cad rect, .cad circle { fill: none; stroke-width: 1; }
  .cad .bg { fill: #000; }
  .dred path { stroke: #800000; }
  .cad .red { stroke: #b40000; }
  .yellow { stroke: #a8a800; }
  .yellow .dim { stroke: #8c8c00; }
  .magenta { stroke: #c000c0; }
  .magenta .dim { stroke: #8c008c; }
  .green { stroke: #009600; }
  .green .tick { stroke: #00d000; }
  .white { stroke: #c8c8c8; }
  .cad .orange { stroke: #e05000; stroke-width: 2; }
  .pad { stroke: #a0a000; }
  .padline { stroke: #c8c800; }
  .navy { stroke: #0000a0; }
  .pile { stroke: #b4b400; }
  .cad .dot { stroke: #f04010; stroke-width: 2; }
  .cyan { stroke: #009c9c; }
  .cad .beamblue { stroke: #00f; stroke-width: 10; }
  .cad .beamred { stroke: #f00; stroke-width: 7; }
  .cad .arrowblue { stroke: #00f; stroke-width: 7; stroke-linecap: round; }
  .cad .headblue { stroke: #00f; fill: #00f; stroke-width: 7; stroke-linejoin: round; }
  .cad .arrowred { stroke: #f00; stroke-width: 3; stroke-linecap: round; }
  .cad .headred { stroke: #f00; fill: #f00; }
  .num { font-family: "Liberation Sans Narrow", "Roboto", sans-serif; fill: #c8c8c8; text-anchor: middle; }
  .small { font-size: 10px; }
  .mid { font-size: 14px; }
  .c20 { font-size: 12px; }
  .layer { font-size: 9px; fill: #ddd; }
  .big { font-size: 22px; font-weight: 300; fill: #aaa; }
  .scale { font-size: 16px; font-weight: 300; fill: #aaa; }
  .tag { font-size: 17px; font-weight: 300; fill: #00b0b0; }
  .tj { font-size: 20px; }
  .wall { font-size: 12px; fill: #00b4b4; }
  .mark { font-family: "Noto Serif CJK SC", "Noto Sans CJK SC", serif; font-weight: 700; font-size: 23px; fill: #f00; }

  .status { height: 23px; border-top: 1px solid #bfbfbf; display: flex; align-items: center; padding: 0 5px 0 10px; flex: none; white-space: nowrap; }
  .pick { margin: 0 29px 0 9px; }
  .status a { margin-left: 7px; text-decoration: underline; }
  .right { margin-left: auto; display: flex; align-items: center; color: #808080; }
  .lab { gap: 8px; margin-right: 11px; }
  .sq { width: 37px; }
  .dl, .zoom { gap: 9px; padding-left: 7px; }
  .dl { margin-right: 4px; }

  footer { height: 40px; flex: none; background: #07171b; display: flex; color: #f2f2f2; }
  .start { width: 48px; background: #050808; }
  .cortana { flex: none; background: #f2f2f2; color: #222; display: flex; align-items: center; gap: 10px; padding: 0 14px 0 9px; box-sizing: border-box; width: 344px; font-size: 14px; }
  .cortana input { flex: 1; }
  .cortana input::placeholder { color: #333; opacity: 1; }
  .pinned, .running, .tray { display: flex; }
  .pinned button { width: 51px; }
  .running { padding-left: 2px; }
  .running button { width: 46px; box-sizing: border-box; border-bottom: 2px solid transparent; border-top: 2px solid transparent; }
  .running .active { background: #3a484b; }
  .running .open { border-bottom-color: #76b9ed; }
  .tray { margin-left: auto; align-items: stretch; font-size: 12px; }
  .cpu, .clock { text-align: center; line-height: 17px; padding-top: 3px; }
  .cpu { width: 86px; }
  .clock { width: 78px; }
  .w16 { width: 16px; } .w20 { width: 20px; } .w26 { width: 26px; } .w28 { width: 28px; } .w30 { width: 30px; } .w40 { width: 40px; } .w46 { width: 46px; }
  .desk { width: 4px; border-left: 1px solid #6a7072; }
</style>
